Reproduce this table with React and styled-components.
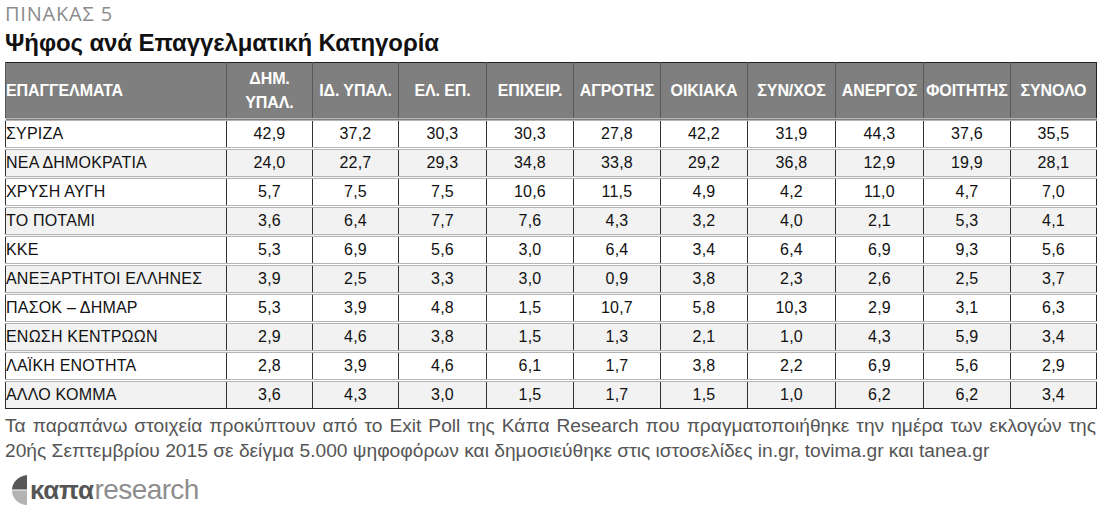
import React from "react";
import styled, { createGlobalStyle } from "styled-components";

const Global = createGlobalStyle`
  html, body { margin: 0; padding: 0; background: #ffffff; }
  body { font-family: "Liberation Sans", Arial, sans-serif; }
`;

const Page = styled.div`
  width: 1105px;
  height: 519px;
  padding: 0 0 0 5px;
  box-sizing: border-box;
  overflow: hidden;
`;

const Kicker = styled.div`
  font-family: "Open Sans", "Liberation Sans", sans-serif;
  font-size: 20px;
  line-height: 24px;
  padding-top: 2px;
  height: 26px;
  box-sizing: border-box;
  color: #8c8c8c;
  letter-spacing: 0.8px;
`;

const Title = styled.h1`
  margin: 0;
  font-family: "Liberation Sans", Arial, sans-serif;
  font-weight: 700;
  font-size: 24px;
  line-height: 28px;
  color: #111;
  height: 36px;
  padding-top: 3px;
  box-sizing: border-box;
  letter-spacing: -0.1px;
`;

const Table = styled.table`
  border-collapse: collapse;
  table-layout: fixed;
  width: 1091px;
  font-family: "Liberation Sans", Arial, sans-serif;
  border: 1px solid #222;
`;

const HeadCell = styled.th`
  background: #7f7f7f;
  color: #fff;
  font-weight: 700;
  font-size: 16px;
  line-height: 24px;
  height: 55px;
  padding: 0 ${(p) => (p.$first ? "0" : "1px")};
  text-align: ${(p) => (p.$first ? "left" : "center")};
  border-left: 1px solid #595959;
  white-space: nowrap;
  letter-spacing: -0.1px;
  vertical-align: middle;
`;

const Row = styled.tr`
  background: ${(p) => (p.$alt ? "#f2f2f2" : "#ffffff")};
`;

const Cell = styled.td`
  height: 26px;
  padding: 0 ${(p) => (p.$first ? "0" : "1px")};
  font-size: 16px;
  line-height: 26px;
  color: #111;
  text-align: ${(p) => (p.$first ? "left" : "center")};
  border-left: 1px solid #333;
  border-top: 3px double #b5b5b5;
  white-space: nowrap;
  letter-spacing: 0.2px;
`;

const Note = styled.p`
  margin: 4px 0 0 0;
  width: 1091px;
  font-family: "Liberation Sans", Arial, sans-serif;
  font-size: 19.2px;
  line-height: 25px;
  color: #555;
  text-align: justify;
`;

const Logo = styled.div`
  display: flex;
  align-items: center;
  gap: 2px;
  margin-top: 10px;
  padding-left: 5px;
  height: 34px;
`;

const LogoBold = styled.span`
  font-family: "Liberation Sans", sans-serif;
  font-weight: 700;
  font-size: 26px;
  color: #555;
  letter-spacing: -0.3px;
`;

const LogoLight = styled.span`
  font-family: "Liberation Sans", sans-serif;
  font-weight: 400;
  font-size: 28px;
  color: #8e8e8e;
  letter-spacing: -0.6px;
  margin-left: -1px;
`;

const cols = [221, 86, 86, 88, 87, 87, 87, 88, 88, 87, 86];

const headers = [
  "ΕΠΑΓΓΕΛΜΑΤΑ",
  ["ΔΗΜ.", "ΥΠΑΛ."],
  "ΙΔ. ΥΠΑΛ.",
  "ΕΛ. ΕΠ.",
  "ΕΠΙΧΕΙΡ.",
  "ΑΓΡΟΤΗΣ",
  "ΟΙΚΙΑΚΑ",
  "ΣΥΝ/ΧΟΣ",
  "ΑΝΕΡΓΟΣ",
  "ΦΟΙΤΗΤΗΣ",
  "ΣΥΝΟΛΟ",
];

const rows = [
  ["ΣΥΡΙΖΑ", "42,9", "37,2", "30,3", "30,3", "27,8", "42,2", "31,9", "44,3", "37,6", "35,5"],
  ["ΝΕΑ ΔΗΜΟΚΡΑΤΙΑ", "24,0", "22,7", "29,3", "34,8", "33,8", "29,2", "36,8", "12,9", "19,9", "28,1"],
  ["ΧΡΥΣΗ ΑΥΓΗ", "5,7", "7,5", "7,5", "10,6", "11,5", "4,9", "4,2", "11,0", "4,7", "7,0"],
  ["ΤΟ ΠΟΤΑΜΙ", "3,6", "6,4", "7,7", "7,6", "4,3", "3,2", "4,0", "2,1", "5,3", "4,1"],
  ["ΚΚΕ", "5,3", "6,9", "5,6", "3,0", "6,4", "3,4", "6,4", "6,9", "9,3", "5,6"],
  ["ΑΝΕΞΑΡΤΗΤΟΙ ΕΛΛΗΝΕΣ", "3,9", "2,5", "3,3", "3,0", "0,9", "3,8", "2,3", "2,6", "2,5", "3,7"],
  ["ΠΑΣΟΚ – ΔΗΜΑΡ", "5,3", "3,9", "4,8", "1,5", "10,7", "5,8", "10,3", "2,9", "3,1", "6,3"],
  ["ΕΝΩΣΗ ΚΕΝΤΡΩΩΝ", "2,9", "4,6", "3,8", "1,5", "1,3", "2,1", "1,0", "4,3", "5,9", "3,4"],
  ["ΛΑΪΚΗ ΕΝΟΤΗΤΑ", "2,8", "3,9", "4,6", "6,1", "1,7", "3,8", "2,2", "6,9", "5,6", "2,9"],
  ["ΑΛΛΟ ΚΟΜΜΑ", "3,6", "4,3", "3,0", "1,5", "1,7", "1,5", "1,0", "6,2", "6,2", "3,4"],
];

function LogoMark() {
  return (
    <svg width="18" height="30" viewBox="0 0 18 30" aria-hidden="true">
      <path d="M17 0 L17 14.5 L2 14.5 C2.5 7 8 1.5 17 0 Z" fill="#575757" />
      <path d="M2 15.5 L17 15.5 L17 30 C8.7 30 2 23.3 2 15.5 Z" fill="#b3b3b3" />
    </svg>
  );
}

export default function App() {
  return (
    <Page>
      <Global />
      <Kicker>ΠΙΝΑΚΑΣ 5</Kicker>
      <Title>Ψήφος ανά Επαγγελματική Κατηγορία</Title>
      <Table>
        <colgroup>
          {cols.map((w, i) => (
            <col key={i} style={{ width: w }} />
          ))}
        </colgroup>
        <thead>
          <tr>
            {headers.map((h, i) => (
              <HeadCell key={i} $first={i === 0}>
                {Array.isArray(h) ? (
                  <>
                    {h[0]}
                    <br />
                    {h[1]}
                  </>
                ) : (
                  h
                )}
              </HeadCell>
            ))}
          </tr>
        </thead>
        <tbody>
          {rows.map((r, ri) => (
            <Row key={ri} $alt={ri % 2 === 1}>
              {r.map((c, ci) => (
                <Cell key={ci} $first={ci === 0}>
                  {c}
                </Cell>
              ))}
            </Row>
          ))}
        </tbody>
      </Table>
      <Note>
        Τα παραπάνω στοιχεία προκύπτουν από το Exit Poll της Κάπα Research που πραγματοποιήθηκε την ημέρα των εκλογών της 20ής Σεπτεμβρίου 2015 σε δείγμα 5.000 ψηφοφόρων και δημοσιεύθηκε στις ιστοσελίδες in.gr, tovima.gr και tanea.gr
      </Note>
      <Logo>
        <LogoMark />
        <LogoBold>καπα</LogoBold>
        <LogoLight>research</LogoLight>
      </Logo>
    </Page>
  );
}
